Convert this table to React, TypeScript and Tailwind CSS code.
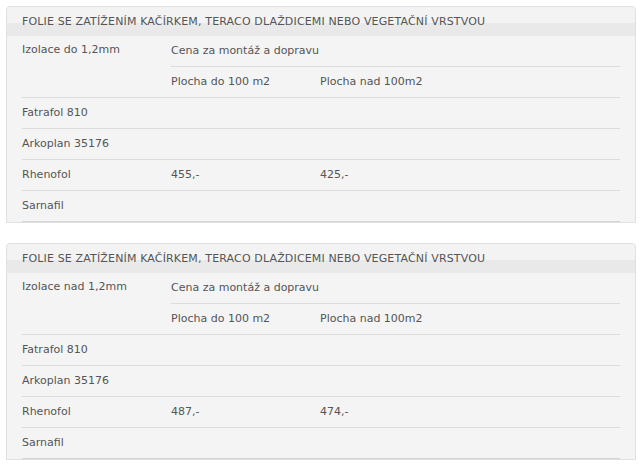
const panels = [
  {
    izolace: "Izolace do 1,2mm",
    prices: { Rhenofol: ["455,-", "425,-"] } as Record<string, string[]>,
  },
  {
    izolace: "Izolace nad 1,2mm",
    prices: { Rhenofol: ["487,-", "474,-"] } as Record<string, string[]>,
  },
];

const materials = ["Fatrafol 810", "Arkoplan 35176", "Rhenofol", "Sarnafil"];

function Panel({ izolace, prices }: { izolace: string; prices: Record<string, string[]> }) {
  return (
    <div className="w-[630px] rounded-t-[4px] border border-[#e0e0e0] bg-[#f4f4f4]">
      <div className="h-[29px] rounded-t-[4px] bg-[linear-gradient(#f3f3f3_0,#f3f3f3_16px,#e9e9e9_16px)] pl-[15px] pt-[8px] tracking-[0.15px] text-[#555]">
        FOLIE SE ZATÍŽENÍM KAČÍRKEM, TERACO DLAŽDICEMI NEBO VEGETAČNÍ VRSTVOU
      </div>
      <div className="mx-[15px] grid grid-cols-[149px_149px_1fr] text-[#555]">
        <div className="row-span-2 border-b border-[#dcdcdc] pt-[7px]">{izolace}</div>
        <div className="col-span-2 flex h-[31px] items-center border-b border-[#dcdcdc] pb-[1px]">Cena za montáž a dopravu</div>
        <div className="flex h-[31px] items-center border-b border-[#dcdcdc]">Plocha do 100 m2</div>
        <div className="flex h-[31px] items-center border-b border-[#dcdcdc]">Plocha nad 100m2</div>
        {materials.map((m, i) => (
          <div key={m} className="contents">
            <div className={`flex h-[31px] items-center border-b ${i === materials.length - 1 ? "border-[#d4d4d4]" : "border-[#dcdcdc]"}`}>{m}</div>
            <div className={`flex h-[31px] items-center border-b ${i === materials.length - 1 ? "border-[#d4d4d4]" : "border-[#dcdcdc]"}`}>{prices[m]?.[0] ?? ""}</div>
            <div className={`flex h-[31px] items-center border-b ${i === materials.length - 1 ? "border-[#d4d4d4]" : "border-[#dcdcdc]"}`}>{prices[m]?.[1] ?? ""}</div>
          </div>
        ))}
      </div>
    </div>
  );
}

export default function App() {
  return (
    <div className="min-h-[466px] bg-white pl-[6px] pt-[6px] font-['DejaVu_Sans',sans-serif] text-[11px] leading-[14px]">
      <div className="flex flex-col gap-[20px]">
        {panels.map((p) => (
          <Panel key={p.izolace} {...p} />
        ))}
      </div>
    </div>
  );
}
